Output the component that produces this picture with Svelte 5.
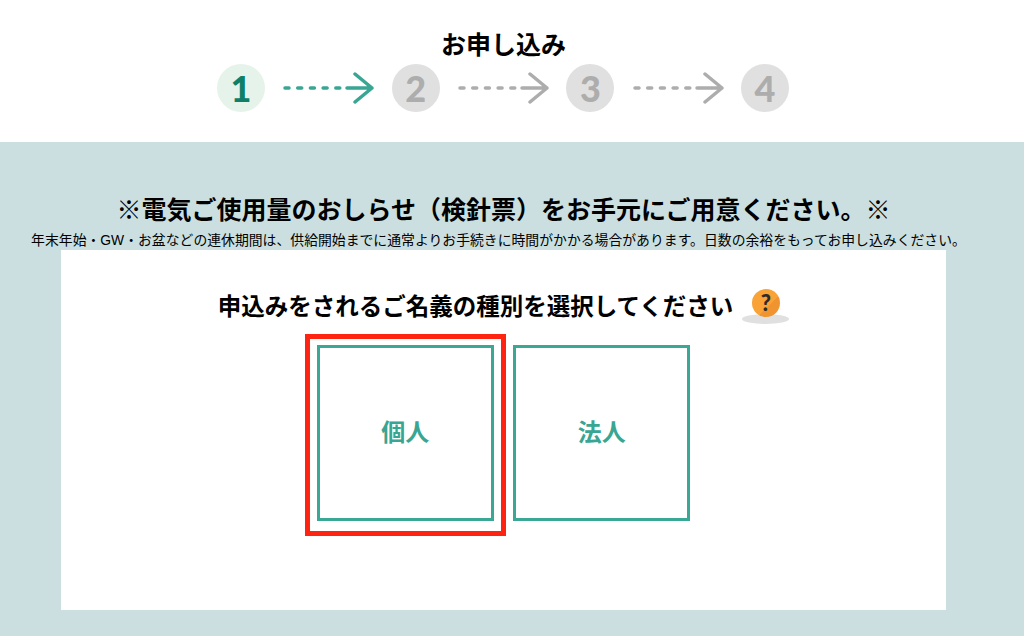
<script>
  const steps = [1, 2, 3, 4];
</script>

<header class="head">
  <h1>お申し込み</h1>
  <ol class="steps">
    {#each steps as n, i}
      <li class="num" class:on={i === 0}>{n}</li>
      {#if i < steps.length - 1}
        <li class="arrow" class:on={i === 0}>
          <svg width="92" height="32" viewBox="0 0 92 32" fill="none" stroke="currentColor" stroke-width="3.5" stroke-linecap="round" stroke-linejoin="round">
            <path d="M3 16H58" stroke-dasharray="4 8.7" />
            <path d="M65 16H90M73 2L90 16L73 30" />
          </svg>
        </li>
      {/if}
    {/each}
  </ol>
</header>

<main class="main">
  <h2>※電気ご使用量のおしらせ（検針票）をお手元にご用意ください。※</h2>
  <p class="note">年末年始・GW・お盆などの連休期間は、供給開始までに通常よりお手続きに時間がかかる場合があります。日数の余裕をもってお申し込みください。</p>
  <section class="panel">
    <div class="ask">
      <h3>申込みをされるご名義の種別を選択してください</h3>
      <span class="help">
        <span class="q">?</span>
        <span class="shadow"></span>
      </span>
    </div>
    <div class="choices">
      <button class="choice marked">個人</button>
      <button class="choice">法人</button>
    </div>
  </section>
</main>

<style>
  :global(body) {
    margin: 0;
    background: #fff;
    font-family: "Liberation Sans", "Noto Sans CJK JP", sans-serif;
    color: #000;
  }

  .head {
    height: 142px;
    box-sizing: border-box;
    padding: 30px 17px 0 0;
    text-align: center;
  }

  h1 {
    margin: 0;
    font-size: 25px;
    line-height: 30px;
    font-weight: 700;
  }

  .steps {
    list-style: none;
    display: flex;
    justify-content: center;
    align-items: center;
    gap: 17.33px;
    margin: 0;
    padding: 4px 1px 0 0;
  }

  .num {
    width: 48px;
    height: 48px;
    border-radius: 50%;
    background: #e0e0e0;
    color: #adadad;
    font-family: "Lato", sans-serif;
    font-weight: 900;
    font-size: 36px;
    line-height: 48px;
  }

  .num.on {
    background: #e6f3ea;
    color: #0f7f68;
  }

  .arrow {
    display: flex;
    width: 92px;
    color: #adadad;
  }

  .arrow.on {
    color: #38a692;
  }

  .main {
    height: 494px;
    box-sizing: border-box;
    padding: 50px 17px 0 0;
    background: #cbdfe0;
    text-align: center;
  }

  h2 {
    margin: 0;
    font-size: 25px;
    line-height: 36px;
    font-weight: 700;
  }

  .note {
    margin: 2px 10px 0 0;
    font-size: 13.85px;
    line-height: 20px;
    white-space: nowrap;
  }

  .panel {
    width: 885px;
    height: 360px;
    margin: 0 auto;
    box-sizing: border-box;
    padding-top: 38px;
    background: #fff;
  }

  .ask {
    display: flex;
    justify-content: center;
    align-items: flex-start;
    gap: 9px;
  }

  h3 {
    margin: 0;
    font-size: 23.5px;
    line-height: 38px;
    font-weight: 700;
  }

  .help {
    display: flex;
    flex-direction: column;
    align-items: center;
    width: 47px;
    height: 38px;
  }

  .q {
    position: relative;
    width: 28px;
    height: 28px;
    margin-top: 1px;
    border-radius: 50%;
    background: linear-gradient(135deg, #f9a236 60%, #f09430 60%);
    color: #2b2b2b;
    font-family: "Lato", sans-serif;
    font-size: 22px;
    font-weight: 900;
    line-height: 28px;
  }

  .shadow {
    width: 47px;
    height: 10px;
    margin-top: -3px;
    border-radius: 50%;
    background: #e0e0e0;
  }

  .choices {
    display: flex;
    justify-content: center;
    gap: 19.5px;
    margin-top: 19px;
  }

  .choice {
    position: relative;
    width: 177px;
    height: 176px;
    padding: 0 0 6px;
    border: 3px solid #3ba795;
    background: #fff;
    color: #38a692;
    font-family: inherit;
    font-size: 24px;
    font-weight: 700;
  }

  .marked::after {
    content: "";
    position: absolute;
    top: -14px;
    left: -15px;
    right: -15px;
    bottom: -18px;
    border: 5px solid #ff2412;
  }
</style>
